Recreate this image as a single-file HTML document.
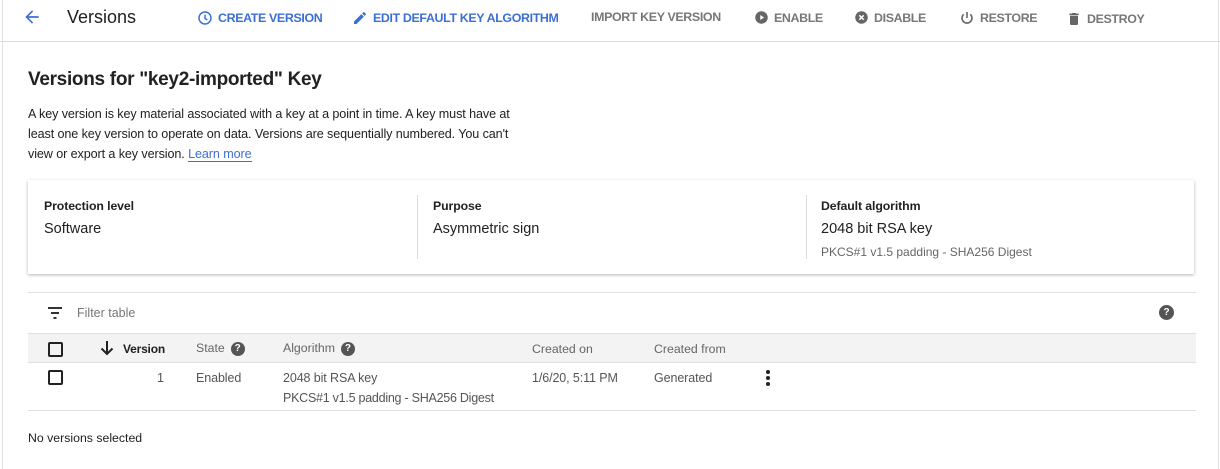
<!DOCTYPE html>
<html><head><style>
*{margin:0;padding:0;box-sizing:border-box}
body{width:1220px;height:469px;background:#fff;font-family:"Liberation Sans",sans-serif;color:#202124;position:relative;overflow:hidden}
.abs{position:absolute;white-space:nowrap}
.bar{position:absolute;left:0;top:0;width:1220px;height:42px;border-bottom:1px solid #dadce0}
.btn{position:absolute;top:10px;font-size:12.4px;font-weight:bold;letter-spacing:-0.35px;display:flex;align-items:center;gap:5px}
.blue{color:#3b6fd4}.gray{color:#777}
svg{display:block}
.lbl{font-size:12.3px;font-weight:bold;letter-spacing:-0.1px}
.val{font-size:14.5px}
.th{font-size:12.3px;color:#666}
.td{font-size:12.5px;color:#555;letter-spacing:-0.1px}
.q{display:inline-block;width:14px;height:14px;border-radius:50%;background:#555;color:#fff;font-size:10px;font-weight:bold;text-align:center;line-height:14px;vertical-align:middle;margin-left:4px}
.cb{position:absolute;width:15px;height:15px;border:2px solid #222;border-radius:2px}
</style></head><body>
<div style="position:absolute;left:2px;top:0;width:1px;height:469px;background:#e0e0e0"></div>
<div style="position:absolute;left:1218px;top:0;width:1px;height:469px;background:#e0e0e0"></div>
<div class="bar"></div>
<svg class="abs" style="left:22px;top:7px" width="20" height="20" viewBox="0 0 24 24"><path d="M20 11H7.8l5.6-5.6L12 4l-8 8 8 8 1.4-1.4L7.8 13H20z" fill="#3b6fd4"/></svg>
<div class="abs" style="left:67px;top:7px;font-size:18px">Versions</div>
<div class="btn blue" style="left:197px"><svg width="16" height="16" viewBox="0 0 24 24"><circle cx="12" cy="12" r="9" fill="none" stroke="#3b6fd4" stroke-width="2.2"/><path d="M12 7v5.5l3.5 2.5" fill="none" stroke="#3b6fd4" stroke-width="2.2"/></svg>CREATE VERSION</div>
<div class="btn blue" style="left:352px"><svg width="16" height="16" viewBox="0 0 24 24"><path d="M3 17.25V21h3.75L17.8 9.94l-3.75-3.75L3 17.25zM20.7 7.04a1 1 0 000-1.41l-2.34-2.34a1 1 0 00-1.41 0l-1.83 1.83 3.75 3.75 1.83-1.83z" fill="#3b6fd4"/></svg>EDIT DEFAULT KEY ALGORITHM</div>
<div class="btn gray" style="left:591px">IMPORT KEY VERSION</div>
<div class="btn gray" style="left:754px"><svg width="15" height="15" viewBox="0 0 24 24"><circle cx="12" cy="12" r="10" fill="#666"/><path d="M10 8l6 4-6 4z" fill="#fff"/></svg>ENABLE</div>
<div class="btn gray" style="left:854px"><svg width="15" height="15" viewBox="0 0 24 24"><circle cx="12" cy="12" r="10" fill="#666"/><path d="M8.5 8.5l7 7M15.5 8.5l-7 7" stroke="#fff" stroke-width="2.4"/></svg>DISABLE</div>
<div class="btn gray" style="left:959px"><svg width="16" height="16" viewBox="0 0 24 24"><path d="M12 3v9" stroke="#666" stroke-width="2.4"/><path d="M7 6.5a7.5 7.5 0 1010 0" fill="none" stroke="#666" stroke-width="2.4"/></svg>RESTORE</div>
<div class="btn gray" style="left:1066px"><svg width="16" height="18" viewBox="0 0 24 24"><path d="M6 19a2 2 0 002 2h8a2 2 0 002-2V7H6zM19 4h-3.5l-1-1h-5l-1 1H5v2h14z" fill="#666"/></svg>DESTROY</div>

<div class="abs" style="left:28px;top:69px;font-size:19px;font-weight:bold;letter-spacing:-0.3px">Versions for "key2-imported" Key</div>
<div class="abs" style="left:28px;top:104px;font-size:12.6px;line-height:20px;white-space:normal;width:500px;letter-spacing:-0.1px">A key version is key material associated with a key at a point in time. A key must have at least one key version to operate on data. Versions are sequentially numbered. You can't view or export a key version. <span style="color:#3b6fd4;border-bottom:1px solid #3b6fd4">Learn more</span></div>

<div style="position:absolute;left:28px;top:180px;width:1166px;height:94px;box-shadow:0 1px 3px rgba(0,0,0,.3);background:#fff"></div>
<div style="position:absolute;left:417px;top:195px;width:1px;height:64px;background:#ddd"></div>
<div style="position:absolute;left:806px;top:195px;width:1px;height:64px;background:#ddd"></div>
<div class="abs lbl" style="left:44px;top:199px">Protection level</div>
<div class="abs val" style="left:44px;top:221px">Software</div>
<div class="abs lbl" style="left:433px;top:199px">Purpose</div>
<div class="abs val" style="left:433px;top:221px">Asymmetric sign</div>
<div class="abs lbl" style="left:821px;top:199px">Default algorithm</div>
<div class="abs val" style="left:821px;top:221px">2048 bit RSA key</div>
<div class="abs" style="left:821px;top:245px;font-size:12px;color:#666">PKCS#1 v1.5 padding - SHA256 Digest</div>

<div style="position:absolute;left:28px;top:292px;width:1168px;height:1px;background:#e0e0e0"></div>
<svg class="abs" style="left:47px;top:306px" width="16" height="14" viewBox="0 0 16 14"><path d="M1 2h14M4 7h8M6.5 12h3" stroke="#333" stroke-width="2"/></svg>
<div class="abs" style="left:77px;top:306px;font-size:12.5px;color:#777">Filter table</div>
<span class="abs q" style="left:1159px;top:305px;margin:0;width:15px;height:15px;line-height:15px">?</span>
<div style="position:absolute;left:28px;top:333px;width:1168px;height:30px;background:#f3f3f3;border-top:1px solid #e0e0e0;border-bottom:1px solid #e0e0e0"></div>
<div class="cb" style="left:48px;top:342px"></div>
<svg class="abs" style="left:100px;top:340px" width="14" height="16" viewBox="0 0 14 16"><path d="M7 1v13M1.5 8.5L7 14l5.5-5.5" fill="none" stroke="#222" stroke-width="2"/></svg>
<div class="abs" style="left:123px;top:342px;font-size:12px;font-weight:bold;letter-spacing:-0.2px">Version</div>
<div class="abs th" style="left:196px;top:341px">State<span class="q" style="margin-left:6px">?</span></div>
<div class="abs th" style="left:283px;top:341px">Algorithm<span class="q" style="margin-left:6px">?</span></div>
<div class="abs th" style="left:532px;top:342px">Created on</div>
<div class="abs th" style="left:654px;top:342px">Created from</div>
<div class="cb" style="left:48px;top:370px"></div>
<div class="abs td" style="left:157px;top:371px">1</div>
<div class="abs td" style="left:196px;top:371px">Enabled</div>
<div class="abs td" style="left:283px;top:371px">2048 bit RSA key</div>
<div class="abs td" style="left:283px;top:391px;letter-spacing:-0.25px">PKCS#1 v1.5 padding - SHA256 Digest</div>
<div class="abs td" style="left:532px;top:371px">1/6/20, 5:11 PM</div>
<div class="abs td" style="left:654px;top:371px">Generated</div>
<svg class="abs" style="left:765px;top:369px" width="6" height="18" viewBox="0 0 6 18"><circle cx="3" cy="3" r="2" fill="#222"/><circle cx="3" cy="9" r="2" fill="#222"/><circle cx="3" cy="15" r="2" fill="#222"/></svg>
<div style="position:absolute;left:28px;top:410px;width:1168px;height:1px;background:#e0e0e0"></div>
<div class="abs" style="left:28px;top:431px;font-size:12.3px">No versions selected</div>
</body></html>
